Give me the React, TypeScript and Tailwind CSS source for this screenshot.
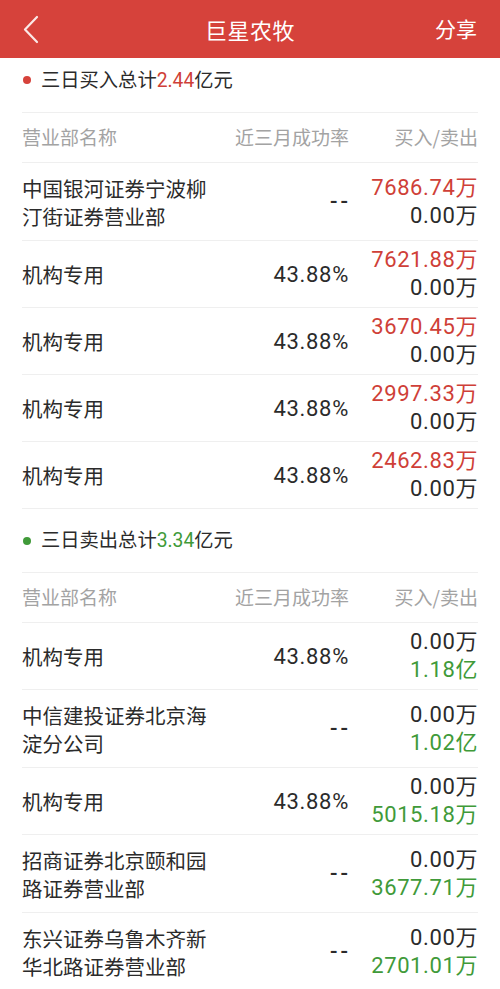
import React from 'react';

type Row = {
  name: string[];
  rate: string;
  buy: string;
  sell: string;
};

const buyRows: Row[] = [
  { name: ['中国银河证券宁波柳', '汀街证券营业部'], rate: '--', buy: '7686.74万', sell: '0.00万' },
  { name: ['机构专用'], rate: '43.88%', buy: '7621.88万', sell: '0.00万' },
  { name: ['机构专用'], rate: '43.88%', buy: '3670.45万', sell: '0.00万' },
  { name: ['机构专用'], rate: '43.88%', buy: '2997.33万', sell: '0.00万' },
  { name: ['机构专用'], rate: '43.88%', buy: '2462.83万', sell: '0.00万' },
];

const sellRows: Row[] = [
  { name: ['机构专用'], rate: '43.88%', buy: '0.00万', sell: '1.18亿' },
  { name: ['中信建投证券北京海', '淀分公司'], rate: '--', buy: '0.00万', sell: '1.02亿' },
  { name: ['机构专用'], rate: '43.88%', buy: '0.00万', sell: '5015.18万' },
  { name: ['招商证券北京颐和园', '路证券营业部'], rate: '--', buy: '0.00万', sell: '3677.71万' },
  { name: ['东兴证券乌鲁木齐新', '华北路证券营业部'], rate: '--', buy: '0.00万', sell: '2701.01万' },
];

const cjk = "font-['Noto_Sans_CJK_SC','Noto_Sans',sans-serif]";
const num = "font-['Roboto','Noto_Sans_CJK_SC',sans-serif]";

function TableHeader() {
  return (
    <div className={`grid h-[50px] grid-cols-[200px_127px_1fr] items-center border-b border-[#efefef] text-[19px] text-[#a3a3a3] ${cjk}`}>
      <span>营业部名称</span>
      <span className="text-right">近三月成功率</span>
      <span className="text-right">买入/卖出</span>
    </div>
  );
}

function DataRow({ row, side }: { row: Row; side: 'buy' | 'sell' }) {
  const tall = row.name.length > 1;
  return (
    <div
      className={`grid grid-cols-[200px_127px_1fr] items-center border-b border-[#efefef] ${tall ? 'h-[78px]' : 'h-[67px]'}`}
    >
      <div className={`text-[20.5px] leading-[28px] text-[#2b2b2b] ${cjk}`}>
        {row.name.map((l) => (
          <div key={l}>{l}</div>
        ))}
      </div>
      {row.rate === '--' ? (
        <div className={`pr-[1px] text-right text-[22px] font-medium tracking-[3px] text-[#2b2b2b] ${num}`}>
          <span className="mr-[-3px]">--</span>
        </div>
      ) : (
        <div className={`text-right text-[22px] tracking-[0.7px] text-[#2b2b2b] ${num}`}>{row.rate}</div>
      )}
      <div className={`flex flex-col items-end text-[22px] leading-[28px] tracking-[0.6px] ${num}`}>
        <span className={side === 'buy' ? 'text-[#cf3f38]' : 'text-[#2b2b2b]'}>{row.buy}</span>
        <span className={side === 'sell' ? 'text-[#409a39]' : 'text-[#2b2b2b]'}>{row.sell}</span>
      </div>
    </div>
  );
}

function Section({
  title,
  total,
  color,
  dot,
  rows,
  side,
  first,
}: {
  title: string;
  total: string;
  color: string;
  dot: string;
  rows: Row[];
  side: 'buy' | 'sell';
  first?: boolean;
}) {
  return (
    <div>
      <div className={`flex items-center gap-[10px] border-b border-[#efefef] pl-[1px] ${first ? 'h-[55px] pb-[10px]' : 'h-[64px]'}`}>
        <span className={`h-[8px] w-[8px] rounded-full ${dot}`} />
        <span className={`text-[19.3px] text-[#2b2b2b] ${cjk}`}>
          {title}
          <span className={`${num} ${color}`}>{total}</span>
          亿元
        </span>
      </div>
      <TableHeader />
      {rows.map((r, i) => (
        <DataRow key={i} row={r} side={side} />
      ))}
    </div>
  );
}

export default function App() {
  return (
    <div className="h-[989px] w-[500px] overflow-hidden bg-white">
      {/* Top bar */}
      <div className={`relative flex h-[58px] items-center justify-center bg-[#d6423b] text-white ${cjk}`}>
        <svg className="absolute left-[22px] top-[15px]" width="18" height="29" viewBox="0 0 18 29" fill="none">
          <path d="M15 2 L3 14.5 L15 27" stroke="#fbe9e7" strokeWidth="2.2" strokeLinecap="round" strokeLinejoin="round" />
        </svg>
        <span className="text-[22px] tracking-[0.5px]">巨星农牧</span>
        <span className="absolute right-[23px] text-[21px]">分享</span>
      </div>

      <div className="px-[22px]">
        <Section
          first
          title="三日买入总计"
          total="2.44"
          color="text-[#cf3f38]"
          dot="bg-[#d6423b]"
          rows={buyRows}
          side="buy"
        />
        <Section
          title="三日卖出总计"
          total="3.34"
          color="text-[#409a39]"
          dot="bg-[#409a39]"
          rows={sellRows}
          side="sell"
        />
      </div>
    </div>
  );
}
